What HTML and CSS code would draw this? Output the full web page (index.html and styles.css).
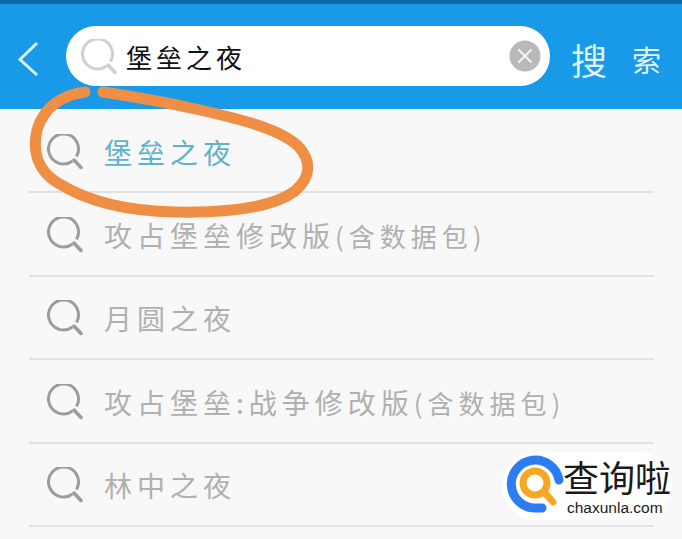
FILE: index.html
```html
<!DOCTYPE html>
<html>
<head>
    <title>搜索</title>
    <link rel="stylesheet" href="styles.css">
</head>
<body>
    <svg width="0" height="0" class="defs">
        <symbol id="search-icon" viewBox="0 0 36 36">
            <path d="M25.500 27A15 15 0 1 1 29.500 22.500" fill="none" stroke="currentColor" stroke-width="3"/>
            <path d="M27 26L34 33.500" fill="none" stroke="currentColor" stroke-width="3.500" stroke-linecap="round"/>
        </symbol>
    </svg>

    <div class="status-bar"></div>
    <div class="top-bar">
        <svg class="back" width="24" height="38" viewBox="0 0 24 38">
            <path d="M21 3L4 19.500L21 35" fill="none" stroke="#d9f3fb" stroke-width="3"/>
        </svg>
        <div class="search-box">
            <svg class="search-box-icon"><use href="#search-icon"/></svg>
            <span class="search-text">堡垒之夜</span>
            <svg class="clear" width="32" height="32" viewBox="0 0 32 32">
                <circle cx="16" cy="16" r="15.500" fill="#b9b9b9"/>
                <path d="M9.500 9.500L22.500 22.500M22.500 9.500L9.500 22.500" stroke="#f4f4f4" stroke-width="2"/>
            </svg>
        </div>
        <div class="search-btn"><span class="btn-first">搜</span><span class="btn-second">索</span></div>
    </div>

    <div class="list">
        <div class="row active"><svg class="row-icon"><use href="#search-icon"/></svg><span>堡垒之夜</span></div>
        <div class="row"><svg class="row-icon"><use href="#search-icon"/></svg><span>攻占堡垒修改版<small>(含数据包)</small></span></div>
        <div class="row"><svg class="row-icon"><use href="#search-icon"/></svg><span>月圆之夜</span></div>
        <div class="row"><svg class="row-icon"><use href="#search-icon"/></svg><span>攻占堡垒:战争修改版<small>(含数据包)</small></span></div>
        <div class="row"><svg class="row-icon"><use href="#search-icon"/></svg><span>林中之夜</span></div>
    </div>

    <!-- hand drawn circle on top of the screenshot -->
    <svg class="scribble" width="682" height="240" viewBox="0 0 682 240">
        <path d="M85 92C62 95 44 107 37 130C32 152 38 171 58 183C85 200 125 211 175 212C225 213 272 208 295 191C311 177 312 161 298 146C280 129 240 119 200 110C165 102 130 96 103 92" fill="none" stroke="#ef8f45" stroke-width="11" stroke-linecap="round"/>
    </svg>

    <div class="watermark">
        <svg class="wm-logo" width="62" height="62" viewBox="0 0 62 62">
            <path d="M54 27A24 24 0 1 0 31 55H37" fill="none" stroke="#2b7df0" stroke-width="9" stroke-linecap="round"/>
            <circle cx="30" cy="30" r="12" fill="none" stroke="#f7a823" stroke-width="7"/>
            <path d="M39 39L48 49" stroke="#f7a823" stroke-width="7" stroke-linecap="round"/>
        </svg>
        <div class="wm-text">
            <div class="wm-name">查询啦</div>
            <div class="wm-url">chaxunla.com</div>
        </div>
    </div>
</body>
</html>
```
FILE: styles.css
```css
body {
    margin: 0;
    height: 539px;
    overflow: hidden;
    position: relative;
    background-color: #f8f8f8;
    font-family: "Noto Sans CJK SC", "Liberation Sans", sans-serif;
}
.defs { position: absolute; }
.status-bar { height: 4px; background-color: #0b6aa6; }
.top-bar {
    height: 105px;
    box-sizing: border-box;
    padding: 22px 0 0 16px;
    display: flex;
    align-items: flex-start;
    background-color: #189ae8;
}
.back { margin: 14px 26px 0 0; flex: none; }
.search-box {
    width: 484px;
    height: 60px;
    box-sizing: border-box;
    padding: 0 9px 0 15px;
    display: flex;
    align-items: center;
    background-color: white;
    border-radius: 30px;
    flex: none;
}
.search-box-icon { width: 36px; height: 36px; color: #d0d0d0; flex: none; margin-top: 2px; }
.search-text {
    margin-left: 9px;
    font-size: 26px;
    letter-spacing: 4px;
    color: #111;
}
.clear { margin-left: auto; flex: none; }
.search-btn {
    height: 60px;
    margin: 3px 0 0 21px;
    display: flex;
    align-items: center;
    gap: 25px;
    color: #dff5fb;
    white-space: nowrap;
}
.btn-first { font-size: 36px; line-height: 48px; }
.btn-second { font-size: 29px; line-height: 48px; }
.list { margin: 1px 28px 0 29px; }
.row {
    height: 83.400px;
    box-sizing: border-box;
    padding: 2px 0 0 18px;
    display: flex;
    align-items: center;
    border-bottom: 2px solid #e2e2e2;
    color: #b0b0b0;
    font-size: 28px;
    letter-spacing: 5px;
    white-space: nowrap;
}
.row span { margin-left: 21px; }
.row small { font-size: 26px; letter-spacing: 5px; }
.row.active { color: #5db3c9; }
.row-icon { width: 36px; height: 36px; color: #9c9c9c; flex: none; }
.scribble { position: absolute; left: 0; top: 0; }
.watermark {
    position: absolute;
    left: 502px;
    top: 452px;
    width: 170px;
    height: 68px;
    display: flex;
    background-color: white;
    border-radius: 34px;
}
.wm-logo { position: absolute; left: 3px; top: 1px; }
.wm-text { margin-left: 61px; }
.wm-name {
    font-size: 36px;
    line-height: 48px;
    color: #1a1a1a;
    white-space: nowrap;
}
.wm-url {
    margin-left: 4px;
    font-family: "Liberation Sans", sans-serif;
    font-size: 15.500px;
    line-height: 16px;
    color: #1a1a1a;
}
```
